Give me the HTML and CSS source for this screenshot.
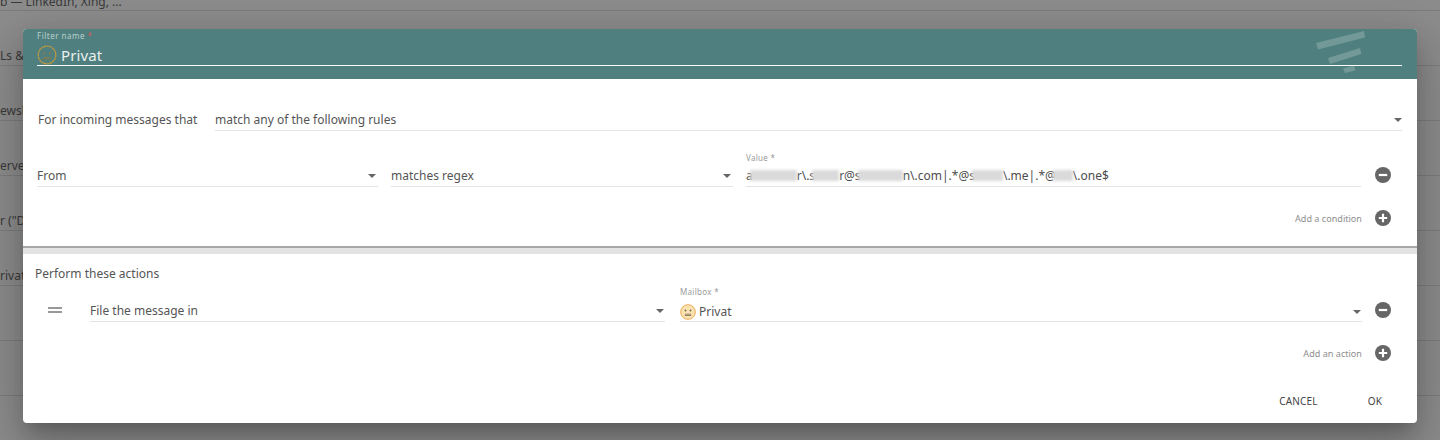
FILE: index.html
```html
<!DOCTYPE html>
<html lang="en">
<head>
<meta charset="utf-8">
<title>Filter</title>
<link rel="stylesheet" href="styles.css">
</head>
<body>
<main class="backdrop">
  <div class="bg-row bg-first">b — LinkedIn, Xing, ...</div>
  <div class="bg-row">Ls &amp;</div>
  <div class="bg-row">ewsl</div>
  <div class="bg-row">erve</div>
  <div class="bg-row">r ("D</div>
  <div class="bg-row">rivat</div>
  <div class="bg-row"></div>
  <div class="bg-row"></div>
</main>
<section class="dialog">
  <header class="head">
    <div class="head-label">Filter name <span class="req">*</span></div>
    <div class="head-input">
      <svg class="face" viewBox="0 0 20 20"><circle cx="10" cy="10" r="8.800" fill="none" stroke="#c39a3c" stroke-width="1.300" stroke-dasharray="2.400 .5"/><circle cx="7" cy="8.200" r="1.100" fill="#8a7a4a"/><circle cx="13" cy="8.200" r="1.100" fill="#8a7a4a"/><path d="M6 12.600h8M6 14h8" stroke="#8a7a4a" stroke-width=".9"/></svg>
      <span class="head-text">Privat</span>
    </div>
    <svg class="head-logo" viewBox="0 0 50 42"><path d="M0 12 48 0l1 6.500L2 18.500zM12 27 44 17l1.500 6L14 33zM27 37.500 38 34.500l1.500 5L29 42z" fill="#fff" fill-opacity=".2"/></svg>
  </header>
  <div class="rules">
    <div class="match-row">
      <span class="match-label">For incoming messages that</span>
      <div class="field match-field"><span>match any of the following rules</span><i class="caret"></i></div>
    </div>
    <div class="cond-row">
      <div class="field from-field"><span>From</span><i class="caret caret-far"></i></div>
      <div class="field op-field"><span>matches regex</span><i class="caret caret-far"></i></div>
      <div class="field value-field">
        <label class="float float-value">Value *</label>
        <span class="value-text">a<b class="blot blot-a"></b>r\.s<b class="blot blot-b"></b>r@s<b class="blot blot-c"></b>n\.com|.*@s<b class="blot blot-d"></b>\.me|.*@<b class="blot blot-e"></b>\.one$</span>
      </div>
      <svg class="round-btn" viewBox="0 0 16 16"><circle cx="8" cy="8" r="8" fill="#666"/><rect x="3.800" y="6.900" width="8.400" height="2.200" fill="#fff"/></svg>
    </div>
    <div class="add-row add-cond">
      <span class="add-label">Add a condition</span>
      <svg class="round-btn" viewBox="0 0 16 16"><circle cx="8" cy="8" r="8" fill="#666"/><path d="M3.800 6.900h3.100V3.800h2.200v3.100h3.100v2.200H9.100v3.100H6.900V9.100H3.800z" fill="#fff"/></svg>
    </div>
  </div>
  <div class="divider"></div>
  <div class="actions">
    <div class="actions-title">Perform these actions</div>
    <div class="act-row">
      <span class="handle"></span>
      <div class="field act-field"><span>File the message in</span><i class="caret caret-near"></i></div>
      <div class="field box-field">
        <label class="float float-box">Mailbox *</label>
        <svg class="face-small" viewBox="0 0 16 16"><circle cx="8" cy="8" r="7.300" fill="#fbe3b4" stroke="#e9a94f" stroke-width="1"/><circle cx="5.500" cy="6.500" r="1" fill="#7b6a4c"/><circle cx="10.500" cy="6.500" r="1" fill="#7b6a4c"/><path d="M4.800 10.200h6.400M4.800 11.500h6.400" stroke="#7b6a4c" stroke-width=".8"/></svg>
        <span>Privat</span><i class="caret caret-near"></i>
      </div>
      <svg class="round-btn" viewBox="0 0 16 16"><circle cx="8" cy="8" r="8" fill="#666"/><rect x="3.800" y="6.900" width="8.400" height="2.200" fill="#fff"/></svg>
    </div>
    <div class="add-row add-act">
      <span class="add-label">Add an action</span>
      <svg class="round-btn" viewBox="0 0 16 16"><circle cx="8" cy="8" r="8" fill="#666"/><path d="M3.800 6.900h3.100V3.800h2.200v3.100h3.100v2.200H9.100v3.100H6.900V9.100H3.800z" fill="#fff"/></svg>
    </div>
  </div>
  <footer class="foot">
    <button class="btn">CANCEL</button>
    <button class="btn">OK</button>
  </footer>
</section>
</body>
</html>
```
FILE: styles.css
```css
* { box-sizing: border-box; }
html, body { margin: 0; height: 440px; overflow: hidden; }
body {
  position: relative;
  background: #8c8c8c;
  font-family: "Noto Sans", "Open Sans", sans-serif;
  font-size: 12px;
  color: #555;
}
.backdrop { display: flex; flex-direction: column; }
.bg-row {
  height: 55px;
  flex: none;
  border-bottom: 1px solid #7c7c7c;
  color: #3a3a3a;
  line-height: 20px;
  padding-top: 35px;
  white-space: nowrap;
}
.bg-first { height: 11px; line-height: 0; padding-top: 2px; }
.dialog {
  position: absolute;
  left: 23px;
  top: 29px;
  width: 1394px;
  height: 394px;
  background: #fff;
  border-radius: 4px;
  overflow: hidden;
  display: flex;
  flex-direction: column;
  box-shadow: 0 11px 15px -7px rgba(0,0,0,.2), 0 24px 38px 3px rgba(0,0,0,.14), 0 9px 46px 8px rgba(0,0,0,.12);
}
.head {
  position: relative;
  height: 50px;
  flex: none;
  background: #4f7f7e;
  padding: 0 15px 0 14px;
  color: #fff;
}
.head-label { font-size: 8px; letter-spacing: .5px; line-height: 10px; padding-top: 2px; color: #bcd0cf; height: 12px; }
.req { color: #c9605a; }
.head-input {
  display: flex;
  align-items: center;
  gap: 4px;
  height: 25px;
  padding-top: 3px;
  border-bottom: 1px solid #fff;
}
.face { width: 20px; height: 20px; flex: none; }
.head-text { font-size: 15px; color: #e9efee; letter-spacing: .1px; }
.head-logo { position: absolute; left: 1293px; top: 2px; width: 50px; height: 42px; }
.rules { height: 167px; flex: none; padding: 0 15px 0 14px; }
.field {
  position: relative;
  display: flex;
  align-items: center;
  height: 24px;
  padding-top: 2px;
  border-bottom: 1px solid #e4e4e4;
  white-space: nowrap;
}
.caret {
  margin-left: auto;
  width: 0; height: 0;
  border-left: 4px solid transparent;
  border-right: 4px solid transparent;
  border-top: 4px solid #666;
}
.caret-far { margin-right: 2px; }
.caret-near { margin-right: 1px; }
.float { position: absolute; left: 0; font-size: 8px; letter-spacing: .3px; line-height: 10px; color: #9a9a9a; }
.float-value { top: -10px; }
.float-box { top: -11px; }
.match-row { display: flex; align-items: center; margin-top: 28px; padding-left: 1px; }
.match-label { width: 177px; flex: none; white-space: nowrap; }
.match-field { flex: 1; }
.cond-row { display: flex; align-items: center; margin-top: 32px; gap: 13px; }
.from-field { width: 341px; flex: none; }
.op-field { width: 342px; flex: none; }
.value-field { width: 615px; flex: none; }
.value-text { display: inline-flex; align-items: center; color: #4d4d4d; }
.blot { display: inline-block; height: 11px; margin-left: -3px; background: #dadada; filter: blur(1.500px); }
.blot-a { width: 47px; }
.blot-b { width: 27px; }
.blot-c { width: 45px; }
.blot-d { width: 31px; }
.blot-e { width: 20px; }
.round-btn { width: 16px; height: 16px; flex: none; }
.cond-row .round-btn { margin-left: 1px; }
.add-row { display: flex; align-items: center; justify-content: flex-end; gap: 13px; padding-right: 11px; }
.add-label { font-size: 9.100px; color: #8e8e8e; }
.add-cond { margin-top: 23px; }
.divider { height: 8px; flex: none; background: #e3e3e3; border-top: 2px solid #a8a8a8; }
.actions { flex: 1; padding: 0 15px 0 12px; }
.actions-title { line-height: 16px; margin-top: 12px; }
.act-row { display: flex; align-items: center; margin-top: 16px; }
.handle {
  width: 14px; height: 6px; margin: 0 28px 0 13px; flex: none;
  border-top: 2px solid #999; border-bottom: 2px solid #999;
}
.act-field { width: 575px; flex: none; }
.box-field { width: 682px; flex: none; margin-left: 15px; padding-top: 4px; }
.face-small { width: 16px; height: 16px; flex: none; margin-right: 3px; }
.act-row .round-btn { margin-left: 13px; }
.add-act { margin-top: 23px; }
.foot { display: flex; justify-content: flex-end; align-items: center; height: 44px; padding-right: 35px; gap: 50px; flex: none; }
.btn {
  border: 0; background: none; padding: 0;
  font: inherit; font-size: 10px; color: #444; letter-spacing: .15px;
}
```
